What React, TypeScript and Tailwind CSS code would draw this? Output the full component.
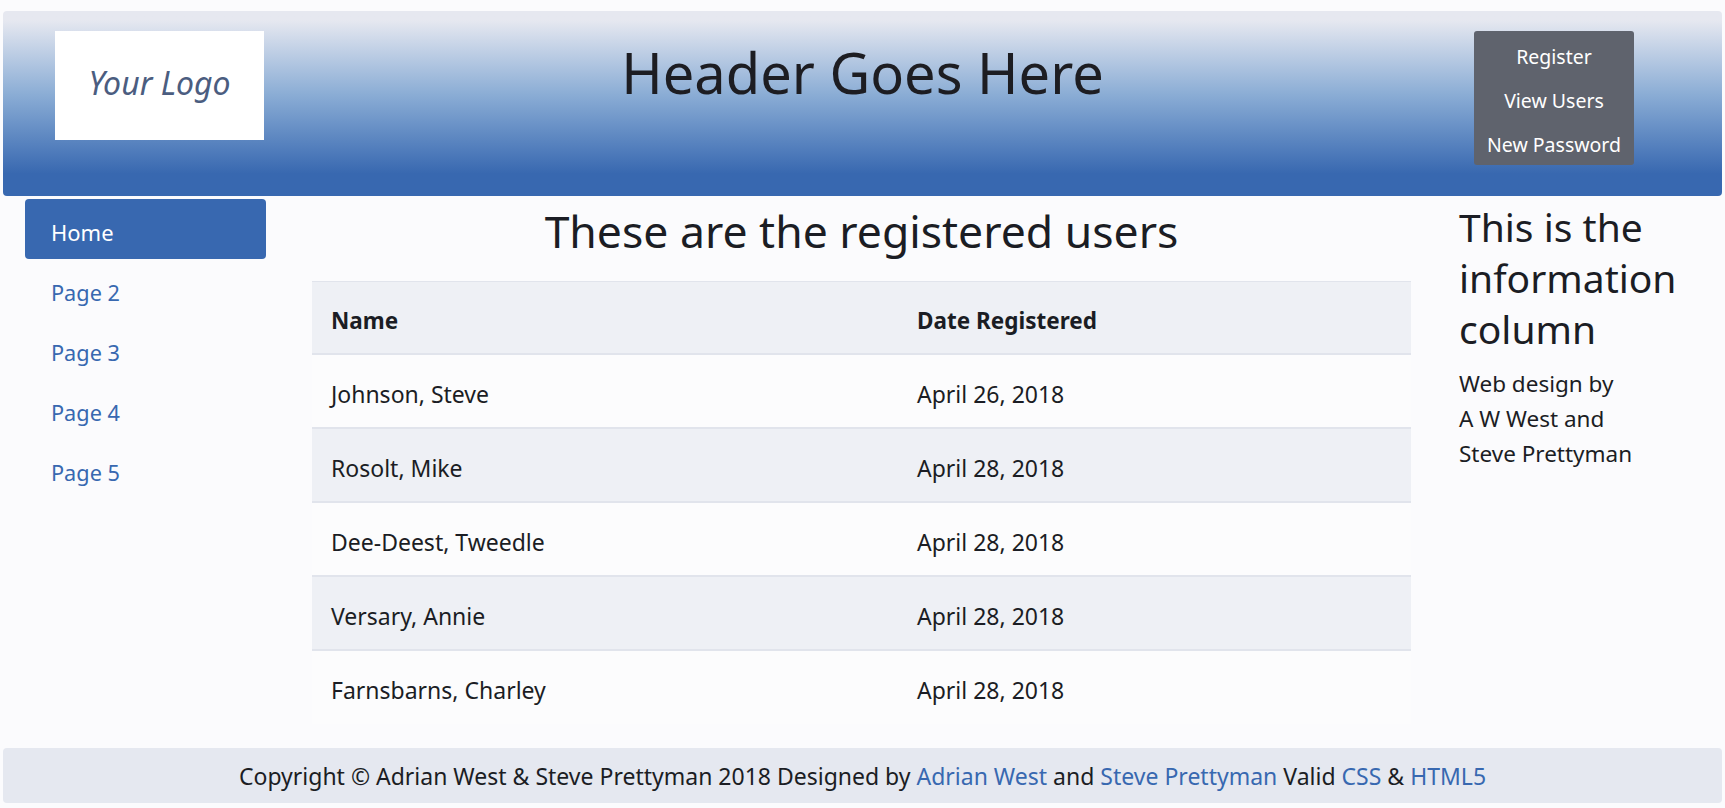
const users = [
  { name: 'Johnson, Steve', date: 'April 26, 2018' },
  { name: 'Rosolt, Mike', date: 'April 28, 2018' },
  { name: 'Dee-Deest, Tweedle', date: 'April 28, 2018' },
  { name: 'Versary, Annie', date: 'April 28, 2018' },
  { name: 'Farnsbarns, Charley', date: 'April 28, 2018' },
]

const pages = ['Page 2', 'Page 3', 'Page 4', 'Page 5']

export default function App() {
  return (
    <div className="min-h-[808px] bg-[#fbfbfd] px-[3px] pt-[11px] font-['Noto_Sans',sans-serif] text-[#1b1d24]">
      {/* Header */}
      <header className="flex h-[185px] items-start rounded-[4px] bg-linear-to-b from-[#e6e8f0] from-5% via-[#8badd5] via-45% to-[#3868b0] to-88% px-[52px] pt-[20px]">
        <div className="flex h-[109px] w-[209px] items-center justify-center bg-white pb-[6px]">
          <span className="text-[32px] italic text-[#4b5d80]">Your Logo</span>
        </div>
        <h1 className="flex-1 pr-[13px] pt-[3px] text-center text-[56px] leading-[76px] text-[#1d1d22]">Header Goes Here</h1>
        <nav className="mr-[36px] flex h-[134px] w-[160px] flex-col items-center justify-center gap-[16px] rounded-[3px] bg-[#5f636d] pt-[6px] text-[19.5px] leading-[28px] text-white">
          <a>Register</a>
          <a>View Users</a>
          <a>New Password</a>
        </nav>
      </header>

      <div className="flex pt-[3px]">
        {/* Sidebar */}
        <aside className="ml-[22px] w-[241px] shrink-0">
          <a className="block h-[60px] rounded-[4px] bg-[#3868b0] pl-[26px] pt-[7px] text-[22px] leading-[53px] text-white">Home</a>
          {pages.map((p) => (
            <a key={p} className="block h-[60px] pl-[26px] pt-[7px] text-[21.7px] leading-[53px] text-[#3868b0]">
              {p}
            </a>
          ))}
        </aside>

        {/* Main */}
        <main className="ml-[46px] w-[1099px] shrink-0">
          <h2 className="pt-[2px] text-center text-[44.5px] leading-[60px]">These are the registered users</h2>
          <table className="mt-[20px] w-full border-collapse text-[23px]">
            <thead>
              <tr className="h-[72px] border-t border-b-2 border-[#e1e4ec] bg-[#eef0f5] text-left">
                <th className="w-[586px] pl-[19px] pt-[8px] text-[22.5px] font-bold">Name</th>
                <th className="pl-[19px] pt-[8px] text-[22.5px] font-bold">Date Registered</th>
              </tr>
            </thead>
            <tbody>
              {users.map((u, i) => (
                <tr
                  key={u.name}
                  className={`h-[74px] border-[#e1e4ec] ${i % 2 === 1 ? 'bg-[#eef0f5]' : 'bg-[#fcfcfd]'} ${i === users.length - 1 ? '' : 'border-b-2'}`}
                >
                  <td className="pl-[19px] pt-[7px]">{u.name}</td>
                  <td className="pl-[19px] pt-[7px]">{u.date}</td>
                </tr>
              ))}
            </tbody>
          </table>
        </main>

        {/* Info column */}
        <section className="ml-[48px] flex-1 pt-[2px]">
          <h3 className="text-[39px] leading-[51px]">This is the information column</h3>
          <p className="mt-[12px] text-[22.5px] leading-[35px]">
            Web design by
            <br />
            A W West and
            <br />
            Steve Prettyman
          </p>
        </section>
      </div>

      {/* Footer */}
      <footer className="mt-[24px] flex h-[55px] items-center justify-center rounded-[4px] bg-[#e5e8f0] pt-[3px] text-[23px]">
        <p>
          Copyright © Adrian West &amp; Steve Prettyman 2018 Designed by <a className="text-[#3868b0]">Adrian West</a> and{' '}
          <a className="text-[#3868b0]">Steve Prettyman</a> Valid <a className="text-[#3868b0]">CSS</a> &amp;{' '}
          <a className="text-[#3868b0]">HTML5</a>
        </p>
      </footer>
    </div>
  )
}
